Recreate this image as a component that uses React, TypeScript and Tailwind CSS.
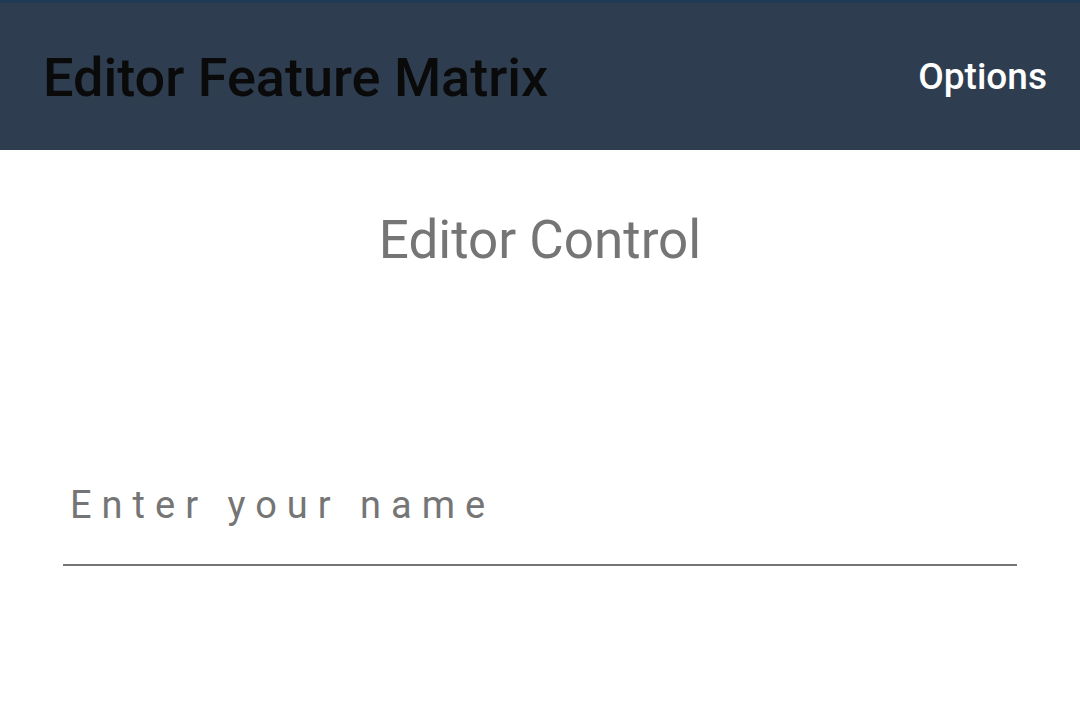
import React from "react";

export default function App() {
  return (
    <div className="w-[1080px] h-[710px] bg-white flex flex-col" style={{ fontFamily: "Roboto, 'Noto Sans', sans-serif" }}>
      <div className="h-[3px] bg-[#1f3a55]" />
      <div className="h-[147px] bg-[#2e3e50] flex items-center justify-between pl-[43px] pr-[33px]">
        <div className="text-[54px] font-medium text-[#0a0a0a] leading-none pt-[3px]">Editor Feature Matrix</div>
        <div className="text-[37px] font-medium text-white leading-none">Options</div>
      </div>
      <div className="flex justify-center pt-[64px]">
        <div className="text-[53px] text-[#757575] leading-none">Editor Control</div>
      </div>
      <div className="px-[63px] pt-[210px]">
        <div className="border-b-2 border-[#757575] pb-[30px] pl-[7px]">
          <input
            className="w-full outline-none bg-transparent text-[38px] tracking-[10px] text-[#757575] placeholder:text-[#757575]"
            placeholder="Enter your name"
          />
        </div>
      </div>
    </div>
  );
}
